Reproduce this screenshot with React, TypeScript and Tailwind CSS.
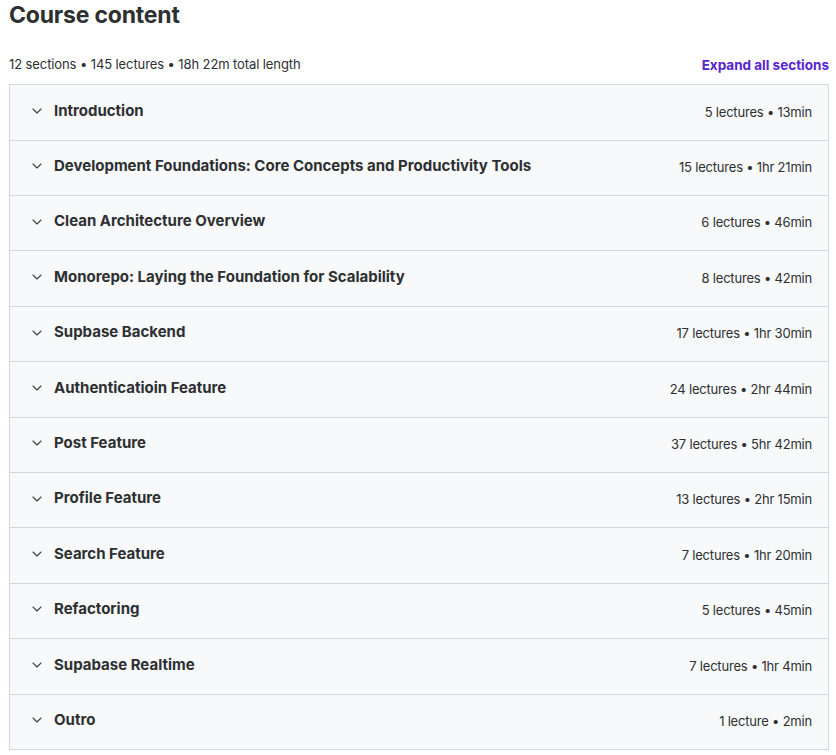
import React from 'react'

type Section = {
  title: string;
  meta: string;
}

const sections: Section[] = [
  { title: 'Introduction', meta: '5 lectures • 13min' },
  { title: 'Development Foundations: Core Concepts and Productivity Tools', meta: '15 lectures • 1hr 21min' },
  { title: 'Clean Architecture Overview', meta: '6 lectures • 46min' },
  { title: 'Monorepo: Laying the Foundation for Scalability', meta: '8 lectures • 42min' },
  { title: 'Supbase Backend', meta: '17 lectures • 1hr 30min' },
  { title: 'Authenticatioin Feature', meta: '24 lectures • 2hr 44min' },
  { title: 'Post Feature', meta: '37 lectures • 5hr 42min' },
  { title: 'Profile Feature', meta: '13 lectures • 2hr 15min' },
  { title: 'Search Feature', meta: '7 lectures • 1hr 20min' },
  { title: 'Refactoring', meta: '5 lectures • 45min' },
  { title: 'Supabase Realtime', meta: '7 lectures • 1hr 4min' },
  { title: 'Outro', meta: '1 lecture • 2min' },
]

function Chevron() {
  return (
    <svg width="10" height="6" viewBox="0 0 10 6" fill="none" className="shrink-0">
      <path d="M1 1l4 4 4-4" stroke="#3e4143" strokeWidth="1.1" strokeLinecap="round" strokeLinejoin="round" />
    </svg>
  )
}

function SectionRow({ section }: { section: Section }) {
  return (
    <div className="flex h-[55.4px] items-center justify-between border-t border-[#d1d7dc] bg-[#f7f9fa] pl-[22px] pr-4 first:h-[54.4px] first:border-t-0">
      <div className="flex items-center gap-[12px] pb-[3px]">
        <Chevron />
        <span className="text-[15px] font-bold text-[#2d2f31]">{section.title}</span>
      </div>
      <span className="text-[13px] tracking-[-0.2px] text-[#2d2f31]">{section.meta}</span>
    </div>
  )
}

export default function App() {
  return (
    <div className="min-h-screen bg-white font-['Inter',sans-serif] text-[#2d2f31]">
      <div className="w-[829px] pl-[9px]">
        <h2 className="pt-[1px] text-[23px] leading-[28px] font-bold tracking-[-0.2px]">Course content</h2>
        <div className="mt-[26px] flex items-center justify-between pb-[9px]">
          <span className="text-[13px] tracking-[-0.1px]">12 sections • 145 lectures • 18h 22m total length</span>
          <button className="text-[13.5px] font-bold text-[#5624d0]">Expand all sections</button>
        </div>
        <div className="border border-[#d1d7dc]">
          {sections.map((s) => (
            <SectionRow key={s.title} section={s} />
          ))}
        </div>
      </div>
    </div>
  )
}
